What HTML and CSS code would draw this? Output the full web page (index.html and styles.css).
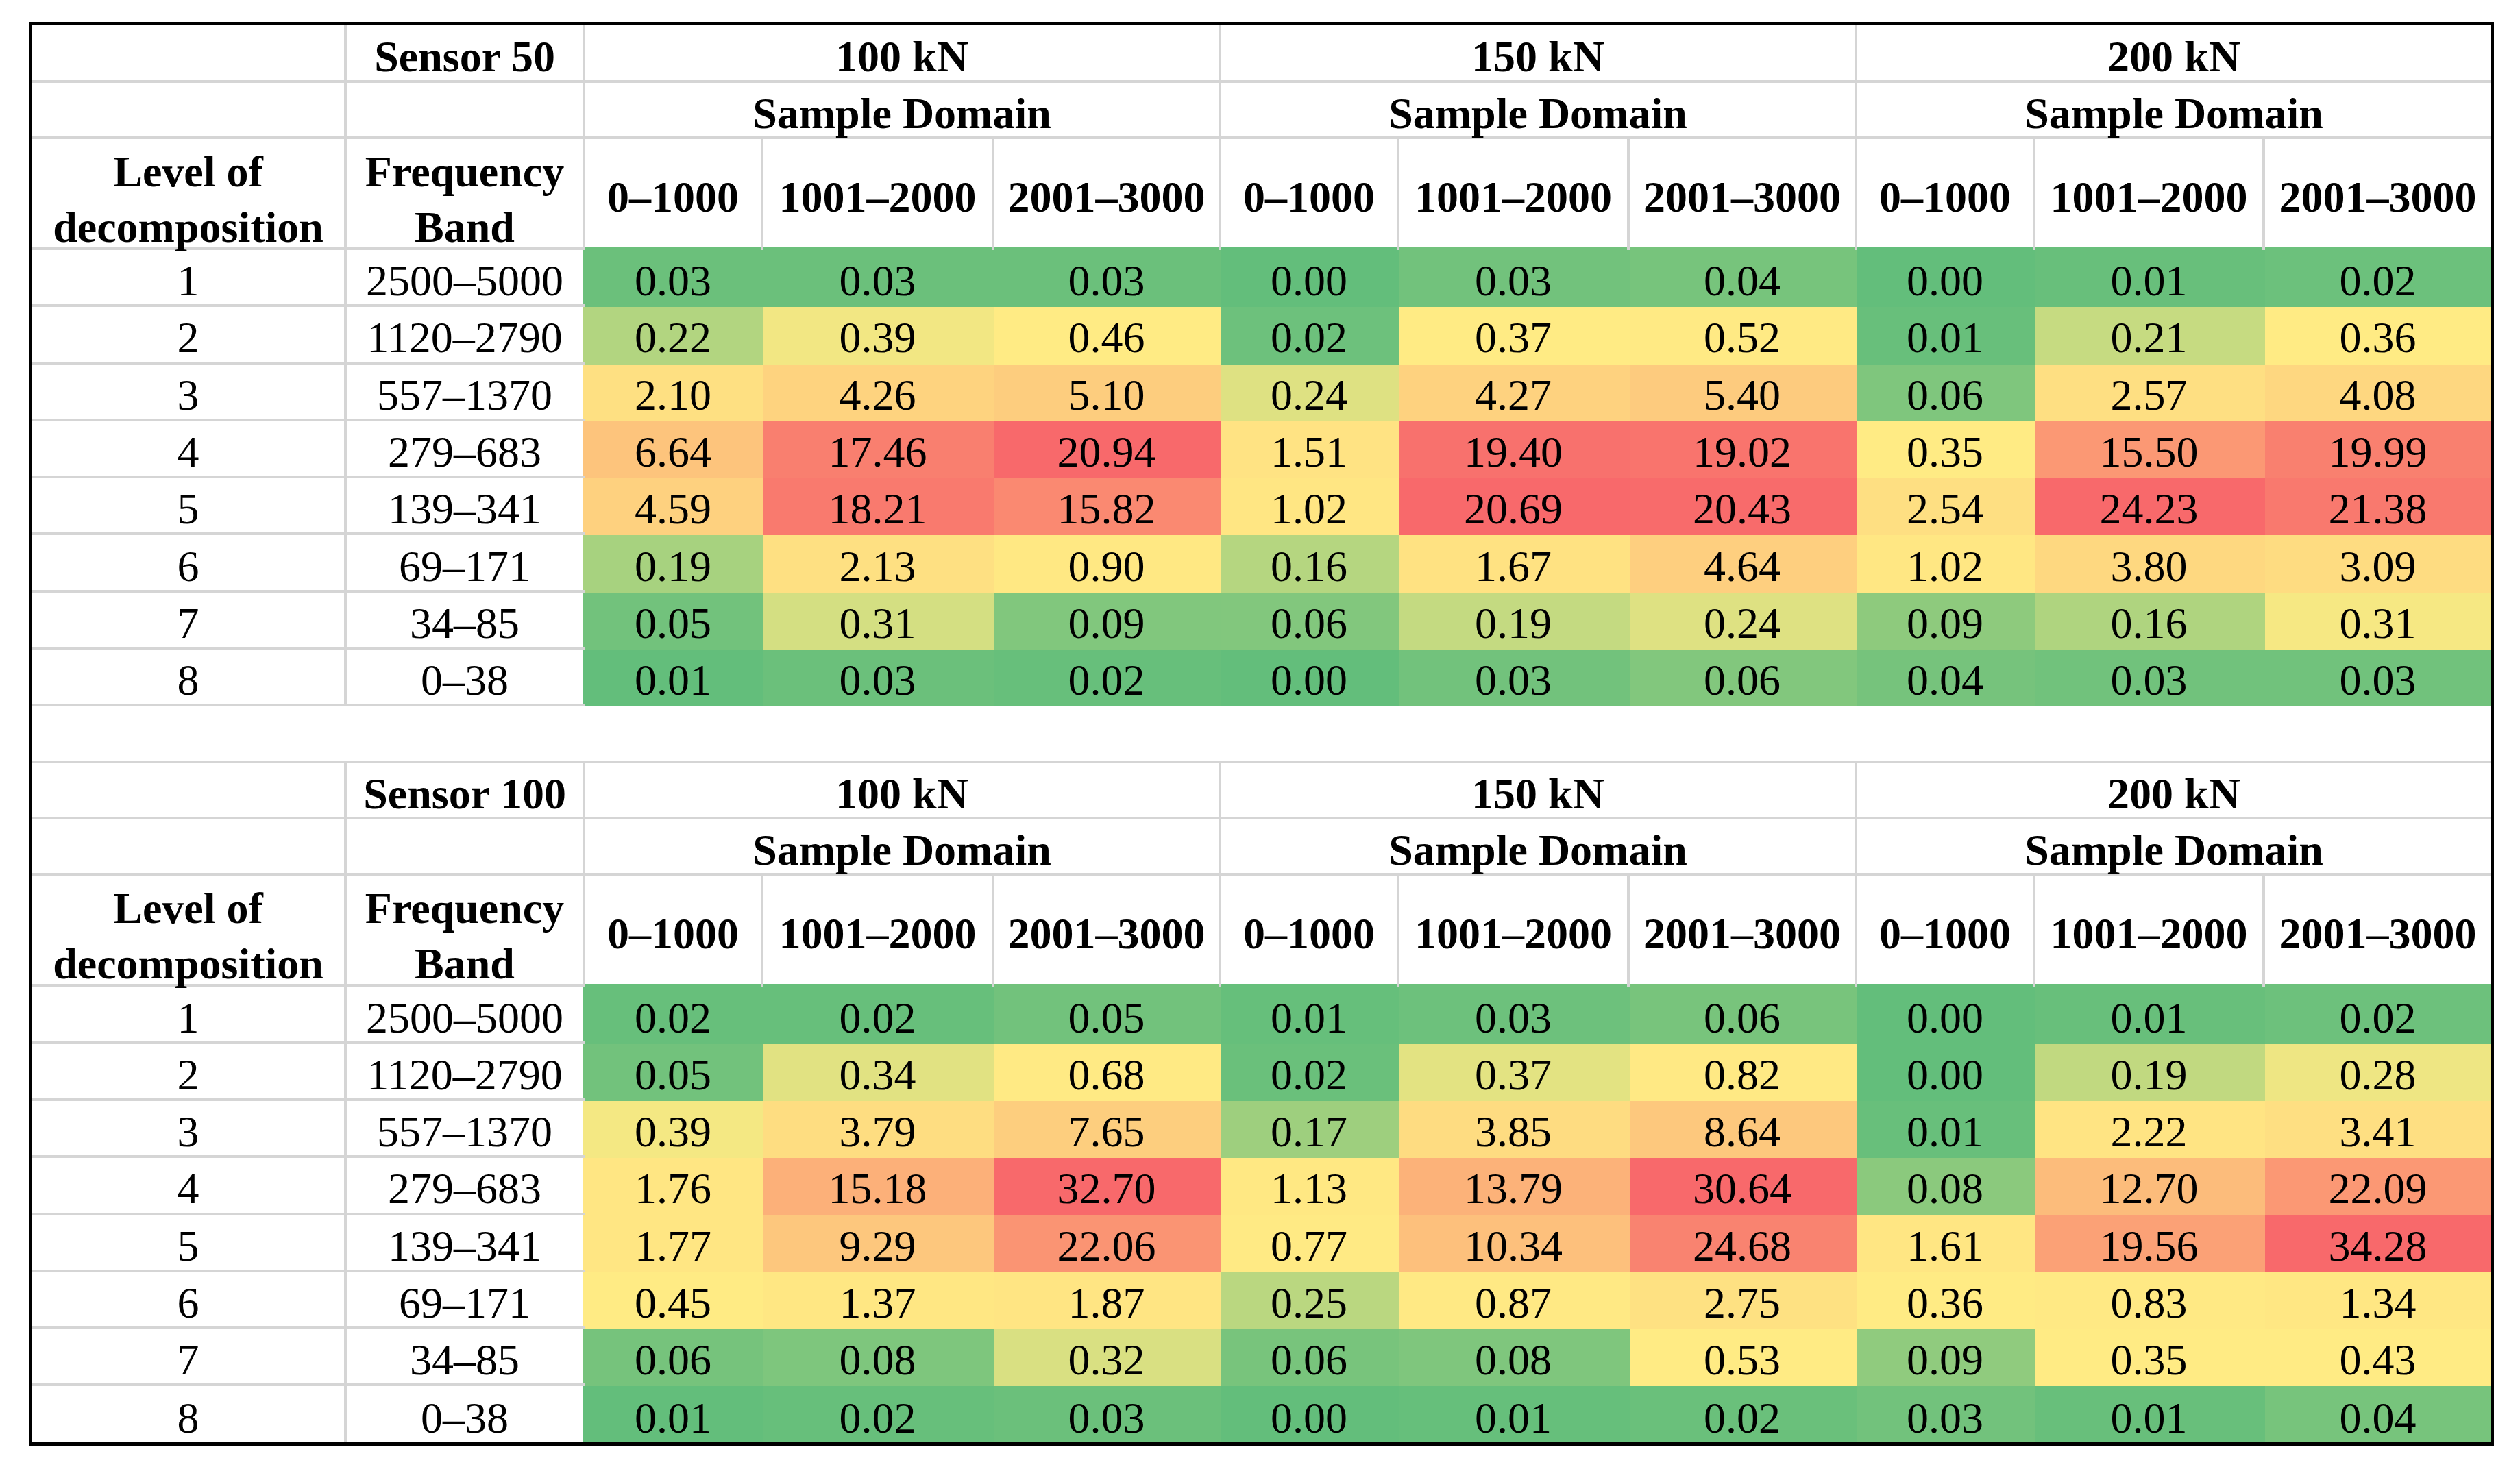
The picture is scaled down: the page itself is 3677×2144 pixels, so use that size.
FILE: index.html
```html
<!DOCTYPE html>
<html lang="en">
<head>
<meta charset="utf-8">
<title>Wavelet decomposition energy table</title>
<link rel="stylesheet" href="styles.css">
</head>
<body>
<div class="frame">
<table class="grid">
<colgroup>
<col class="w-level"><col class="w-band">
<col class="w-r1"><col class="w-r2"><col class="w-r3">
<col class="w-r1"><col class="w-r2b"><col class="w-r3b">
<col class="w-r1"><col class="w-r2c"><col class="w-r3c">
</colgroup>

<tbody class="sensor">
<tr class="h1"><td class="blank"></td><th>Sensor 50</th><th colspan="3">100 kN</th><th colspan="3">150 kN</th><th colspan="3">200 kN</th></tr>
<tr class="h1"><td class="blank"></td><td class="blank"></td><th colspan="3">Sample Domain</th><th colspan="3">Sample Domain</th><th colspan="3">Sample Domain</th></tr>
<tr class="h2"><th class="two"><div>Level of<br>decomposition</div></th><th class="two"><div>Frequency<br>Band</div></th><th class="rng">0–1000</th><th class="rng">1001–2000</th><th class="rng">2001–3000</th><th class="rng">0–1000</th><th class="rng">1001–2000</th><th class="rng">2001–3000</th><th class="rng">0–1000</th><th class="rng">1001–2000</th><th class="rng">2001–3000</th></tr>
<tr class="d"><td>1</td><td class="band">2500–5000</td><td class="v">0.03</td><td class="v">0.03</td><td class="v">0.03</td><td class="v">0.00</td><td class="v">0.03</td><td class="v">0.04</td><td class="v">0.00</td><td class="v">0.01</td><td class="v">0.02</td></tr>
<tr class="d"><td>2</td><td class="band">1120–2790</td><td class="v">0.22</td><td class="v">0.39</td><td class="v">0.46</td><td class="v">0.02</td><td class="v">0.37</td><td class="v">0.52</td><td class="v">0.01</td><td class="v">0.21</td><td class="v">0.36</td></tr>
<tr class="d"><td>3</td><td class="band">557–1370</td><td class="v">2.10</td><td class="v">4.26</td><td class="v">5.10</td><td class="v">0.24</td><td class="v">4.27</td><td class="v">5.40</td><td class="v">0.06</td><td class="v">2.57</td><td class="v">4.08</td></tr>
<tr class="d"><td>4</td><td class="band">279–683</td><td class="v">6.64</td><td class="v">17.46</td><td class="v">20.94</td><td class="v">1.51</td><td class="v">19.40</td><td class="v">19.02</td><td class="v">0.35</td><td class="v">15.50</td><td class="v">19.99</td></tr>
<tr class="d"><td>5</td><td class="band">139–341</td><td class="v">4.59</td><td class="v">18.21</td><td class="v">15.82</td><td class="v">1.02</td><td class="v">20.69</td><td class="v">20.43</td><td class="v">2.54</td><td class="v">24.23</td><td class="v">21.38</td></tr>
<tr class="d"><td>6</td><td class="band">69–171</td><td class="v">0.19</td><td class="v">2.13</td><td class="v">0.90</td><td class="v">0.16</td><td class="v">1.67</td><td class="v">4.64</td><td class="v">1.02</td><td class="v">3.80</td><td class="v">3.09</td></tr>
<tr class="d"><td>7</td><td class="band">34–85</td><td class="v">0.05</td><td class="v">0.31</td><td class="v">0.09</td><td class="v">0.06</td><td class="v">0.19</td><td class="v">0.24</td><td class="v">0.09</td><td class="v">0.16</td><td class="v">0.31</td></tr>
<tr class="d"><td>8</td><td class="band">0–38</td><td class="v">0.01</td><td class="v">0.03</td><td class="v">0.02</td><td class="v">0.00</td><td class="v">0.03</td><td class="v">0.06</td><td class="v">0.04</td><td class="v">0.03</td><td class="v">0.03</td></tr>
</tbody>

<tbody class="gap">
<tr class="g"><td colspan="11"></td></tr>
</tbody>

<tbody class="sensor">
<tr class="h1"><td class="blank"></td><th>Sensor 100</th><th colspan="3">100 kN</th><th colspan="3">150 kN</th><th colspan="3">200 kN</th></tr>
<tr class="h1"><td class="blank"></td><td class="blank"></td><th colspan="3">Sample Domain</th><th colspan="3">Sample Domain</th><th colspan="3">Sample Domain</th></tr>
<tr class="h2"><th class="two"><div>Level of<br>decomposition</div></th><th class="two"><div>Frequency<br>Band</div></th><th class="rng">0–1000</th><th class="rng">1001–2000</th><th class="rng">2001–3000</th><th class="rng">0–1000</th><th class="rng">1001–2000</th><th class="rng">2001–3000</th><th class="rng">0–1000</th><th class="rng">1001–2000</th><th class="rng">2001–3000</th></tr>
<tr class="d"><td>1</td><td class="band">2500–5000</td><td class="v">0.02</td><td class="v">0.02</td><td class="v">0.05</td><td class="v">0.01</td><td class="v">0.03</td><td class="v">0.06</td><td class="v">0.00</td><td class="v">0.01</td><td class="v">0.02</td></tr>
<tr class="d"><td>2</td><td class="band">1120–2790</td><td class="v">0.05</td><td class="v">0.34</td><td class="v">0.68</td><td class="v">0.02</td><td class="v">0.37</td><td class="v">0.82</td><td class="v">0.00</td><td class="v">0.19</td><td class="v">0.28</td></tr>
<tr class="d"><td>3</td><td class="band">557–1370</td><td class="v">0.39</td><td class="v">3.79</td><td class="v">7.65</td><td class="v">0.17</td><td class="v">3.85</td><td class="v">8.64</td><td class="v">0.01</td><td class="v">2.22</td><td class="v">3.41</td></tr>
<tr class="d"><td>4</td><td class="band">279–683</td><td class="v">1.76</td><td class="v">15.18</td><td class="v">32.70</td><td class="v">1.13</td><td class="v">13.79</td><td class="v">30.64</td><td class="v">0.08</td><td class="v">12.70</td><td class="v">22.09</td></tr>
<tr class="d"><td>5</td><td class="band">139–341</td><td class="v">1.77</td><td class="v">9.29</td><td class="v">22.06</td><td class="v">0.77</td><td class="v">10.34</td><td class="v">24.68</td><td class="v">1.61</td><td class="v">19.56</td><td class="v">34.28</td></tr>
<tr class="d"><td>6</td><td class="band">69–171</td><td class="v">0.45</td><td class="v">1.37</td><td class="v">1.87</td><td class="v">0.25</td><td class="v">0.87</td><td class="v">2.75</td><td class="v">0.36</td><td class="v">0.83</td><td class="v">1.34</td></tr>
<tr class="d"><td>7</td><td class="band">34–85</td><td class="v">0.06</td><td class="v">0.08</td><td class="v">0.32</td><td class="v">0.06</td><td class="v">0.08</td><td class="v">0.53</td><td class="v">0.09</td><td class="v">0.35</td><td class="v">0.43</td></tr>
<tr class="d"><td>8</td><td class="band">0–38</td><td class="v">0.01</td><td class="v">0.02</td><td class="v">0.03</td><td class="v">0.00</td><td class="v">0.01</td><td class="v">0.02</td><td class="v">0.03</td><td class="v">0.01</td><td class="v">0.04</td></tr>
</tbody>
</table>
</div>
<script src="script.js"></script>
</body>
</html>
```

FILE: styles.css
```css
html, body {
  margin: 0;
  padding: 0;
  background: #ffffff;
}

.frame {
  margin: 32px 0 0 42px;
  width: 3587px;
  border: 5px solid #000000;
  background: #ffffff;
}

.grid {
  width: 3587px;
  table-layout: fixed;
  border-collapse: collapse;
  border-style: hidden;
  font-family: "Liberation Serif", "Times New Roman", serif;
  font-size: 64px;
  color: #000000;
}

.w-level { width: 457px; }
.w-band  { width: 348px; }
.w-r1    { width: 260px; }
.w-r2    { width: 337px; }
.w-r3    { width: 331px; }
.w-r2b   { width: 336px; }
.w-r3b   { width: 332px; }
.w-r2c   { width: 335px; }
.w-r3c   { width: 331px; }

.grid td,
.grid th {
  border: 4px solid #d5d5d5;
  padding: 11px 0 0 0;
  text-align: center;
  vertical-align: middle;
  line-height: 64px;
  white-space: nowrap;
  overflow: visible;
}

.grid th {
  font-weight: bold;
}

.grid td {
  font-weight: normal;
}

.h1 { height: 82px; }
.h2 { height: 162px; }
.d  { height: 83.3px; }
.g  { height: 83px; }

.grid th.two {
  vertical-align: top;
  padding: 0;
}

.two div {
  height: 148px;
  padding-top: 7px;
  line-height: 81px;
}

.grid th.rng {
  border-bottom: none;
}

.grid td.band {
  border-right: none;
}

.grid td.v {
  background: var(--c, #ffffff);
  border-color: var(--c, #d5d5d5);
}
```

FILE: script.js
```js
(function () {
  var GREEN = [99, 190, 123];
  var YELLOW = [255, 235, 132];
  var RED = [248, 105, 107];

  function mix(a, b, f) {
    f = Math.max(0, Math.min(1, f));
    return 'rgb(' +
      Math.round(a[0] + (b[0] - a[0]) * f) + ',' +
      Math.round(a[1] + (b[1] - a[1]) * f) + ',' +
      Math.round(a[2] + (b[2] - a[2]) * f) + ')';
  }

  var blocks = document.querySelectorAll('tbody.sensor');
  Array.prototype.forEach.call(blocks, function (tb) {
    var groups = [[], [], []];
    Array.prototype.forEach.call(tb.querySelectorAll('tr.d'), function (tr) {
      Array.prototype.forEach.call(tr.querySelectorAll('td.v'), function (td, j) {
        groups[Math.floor(j / 3)].push(td);
      });
    });
    groups.forEach(function (cells) {
      var vals = cells.map(function (c) { return parseFloat(c.textContent); });
      var s = vals.slice().sort(function (a, b) { return a - b; });
      var n = s.length;
      var min = s[0], max = s[n - 1];
      var pos = (n - 1) * 0.5;
      var lo = Math.floor(pos);
      var hi = Math.min(lo + 1, n - 1);
      var mid = s[lo] + (s[hi] - s[lo]) * (pos - lo);
      cells.forEach(function (c, i) {
        var v = vals[i];
        var col;
        if (v <= mid) {
          col = mix(GREEN, YELLOW, mid > min ? (v - min) / (mid - min) : 0);
        } else {
          col = mix(YELLOW, RED, max > mid ? (v - mid) / (max - mid) : 1);
        }
        c.style.setProperty('--c', col);
      });
    });
  });
})();
```
